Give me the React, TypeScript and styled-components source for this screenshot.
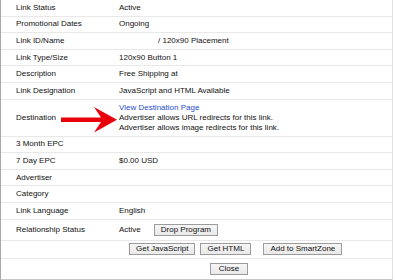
import React from "react";
import styled, { createGlobalStyle } from "styled-components";

const GlobalStyle = createGlobalStyle`
  html, body {
    margin: 0;
    padding: 0;
    background: #ffffff;
  }
  body {
    font-family: "Liberation Sans", Arial, sans-serif;
    font-size: 8px;
    color: #111111;
  }
`;

const Frame = styled.div`
  position: relative;
  width: 393px;
  border-left: 1px solid #a8a8a8;
  border-right: 1px solid #e2e2e2;
  border-bottom: 1px solid #c8c8c8;
  box-sizing: border-box;
`;

const Row = styled.div<{ $tall?: boolean; $h?: number }>`
  display: flex;
  align-items: ${(p) => (p.$tall ? "flex-start" : "center")};
  min-height: ${(p) => p.$h ?? 15.6}px;
  padding: ${(p) => (p.$tall ? "3px 0" : "0")};
  border-bottom: 1px solid #e8e8e8;
  line-height: 10px;
`;

const Label = styled.div<{ $tall?: boolean }>`
  width: 118px;
  flex: none;
  padding-left: 15px;
  box-sizing: border-box;
  align-self: ${(p) => (p.$tall ? "center" : "auto")};
`;

const Value = styled.div`
  flex: 1;
  display: flex;
  align-items: center;
  gap: 13px;
`;

const Indented = styled.span`
  padding-left: 39px;
`;

const Lines = styled.div`
  display: flex;
  flex-direction: column;
`;

const DestLink = styled.a`
  color: #1f4fd0;
  text-decoration: none;
`;

const ButtonRow = styled.div<{ $last?: boolean }>`
  display: flex;
  align-items: center;
  height: ${(p) => (p.$last ? "20px" : "17px")};
  padding-left: ${(p) => (p.$last ? "209px" : "128px")};
  border-bottom: ${(p) => (p.$last ? "none" : "1px solid #e8e8e8")};
`;

const Button = styled.button<{ $gap?: number; $min?: number }>`
  height: 12px;
  min-width: ${(p) => p.$min ?? 0}px;
  margin-left: ${(p) => p.$gap ?? 0}px;
  padding: 0 6px;
  font-family: "Liberation Sans", Arial, sans-serif;
  font-size: 8px;
  line-height: 10px;
  color: #111111;
  background: linear-gradient(#f6f6f6, #e9e9e9);
  border: 1px solid #9c9c9c;
  border-radius: 0;
  white-space: nowrap;
  cursor: pointer;
`;

const Arrow = styled.svg`
  position: absolute;
  left: 58px;
  top: 106px;
`;

const rowsTop: [string, React.ReactNode][] = [
  ["Link Status", "Active"],
  ["Promotional Dates", "Ongoing"],
  ["Link ID/Name", <Indented>/ 120x90 Placement</Indented>],
  ["Link Type/Size", "120x90 Button 1"],
  ["Description", "Free Shipping at"],
  ["Link Designation", "JavaScript and HTML Available"],
];

const rowsBottom: [string, React.ReactNode][] = [
  ["3 Month EPC", ""],
  ["7 Day EPC", "$0.00 USD"],
  ["Advertiser", ""],
  ["Category", ""],
  ["Link Language", "English"],
];

const App: React.FC = () => {
  return (
    <>
      <GlobalStyle />
      <Frame>
        {rowsTop.map(([label, value]) => (
          <Row key={label}>
            <Label>{label}</Label>
            <Value>{value}</Value>
          </Row>
        ))}
        <Row $tall>
          <Label $tall>Destination</Label>
          <Lines>
            <DestLink href="#">View Destination Page</DestLink>
            <span>Advertiser allows URL redirects for this link.</span>
            <span>Advertiser allows image redirects for this link.</span>
          </Lines>
        </Row>
        {rowsBottom.map(([label, value]) => (
          <Row key={label}>
            <Label>{label}</Label>
            <Value>{value}</Value>
          </Row>
        ))}
        <Row $h={20}>
          <Label>Relationship Status</Label>
          <Value>
            Active
            <Button>Drop Program</Button>
          </Value>
        </Row>
        <ButtonRow>
          <Button>Get JavaScript</Button>
          <Button $gap={5}>Get HTML</Button>
          <Button $gap={12}>Add to SmartZone</Button>
        </ButtonRow>
        <ButtonRow $last>
          <Button $min={38}>Close</Button>
        </ButtonRow>
        <Arrow width="60" height="28" viewBox="0 0 60 28">
          <polygon
            points="2,11.5 42,11.5 35,1 58,13.8 35,26.6 42,16 2,16"
            fill="#e8000b"
          />
        </Arrow>
      </Frame>
    </>
  );
};

export default App;
